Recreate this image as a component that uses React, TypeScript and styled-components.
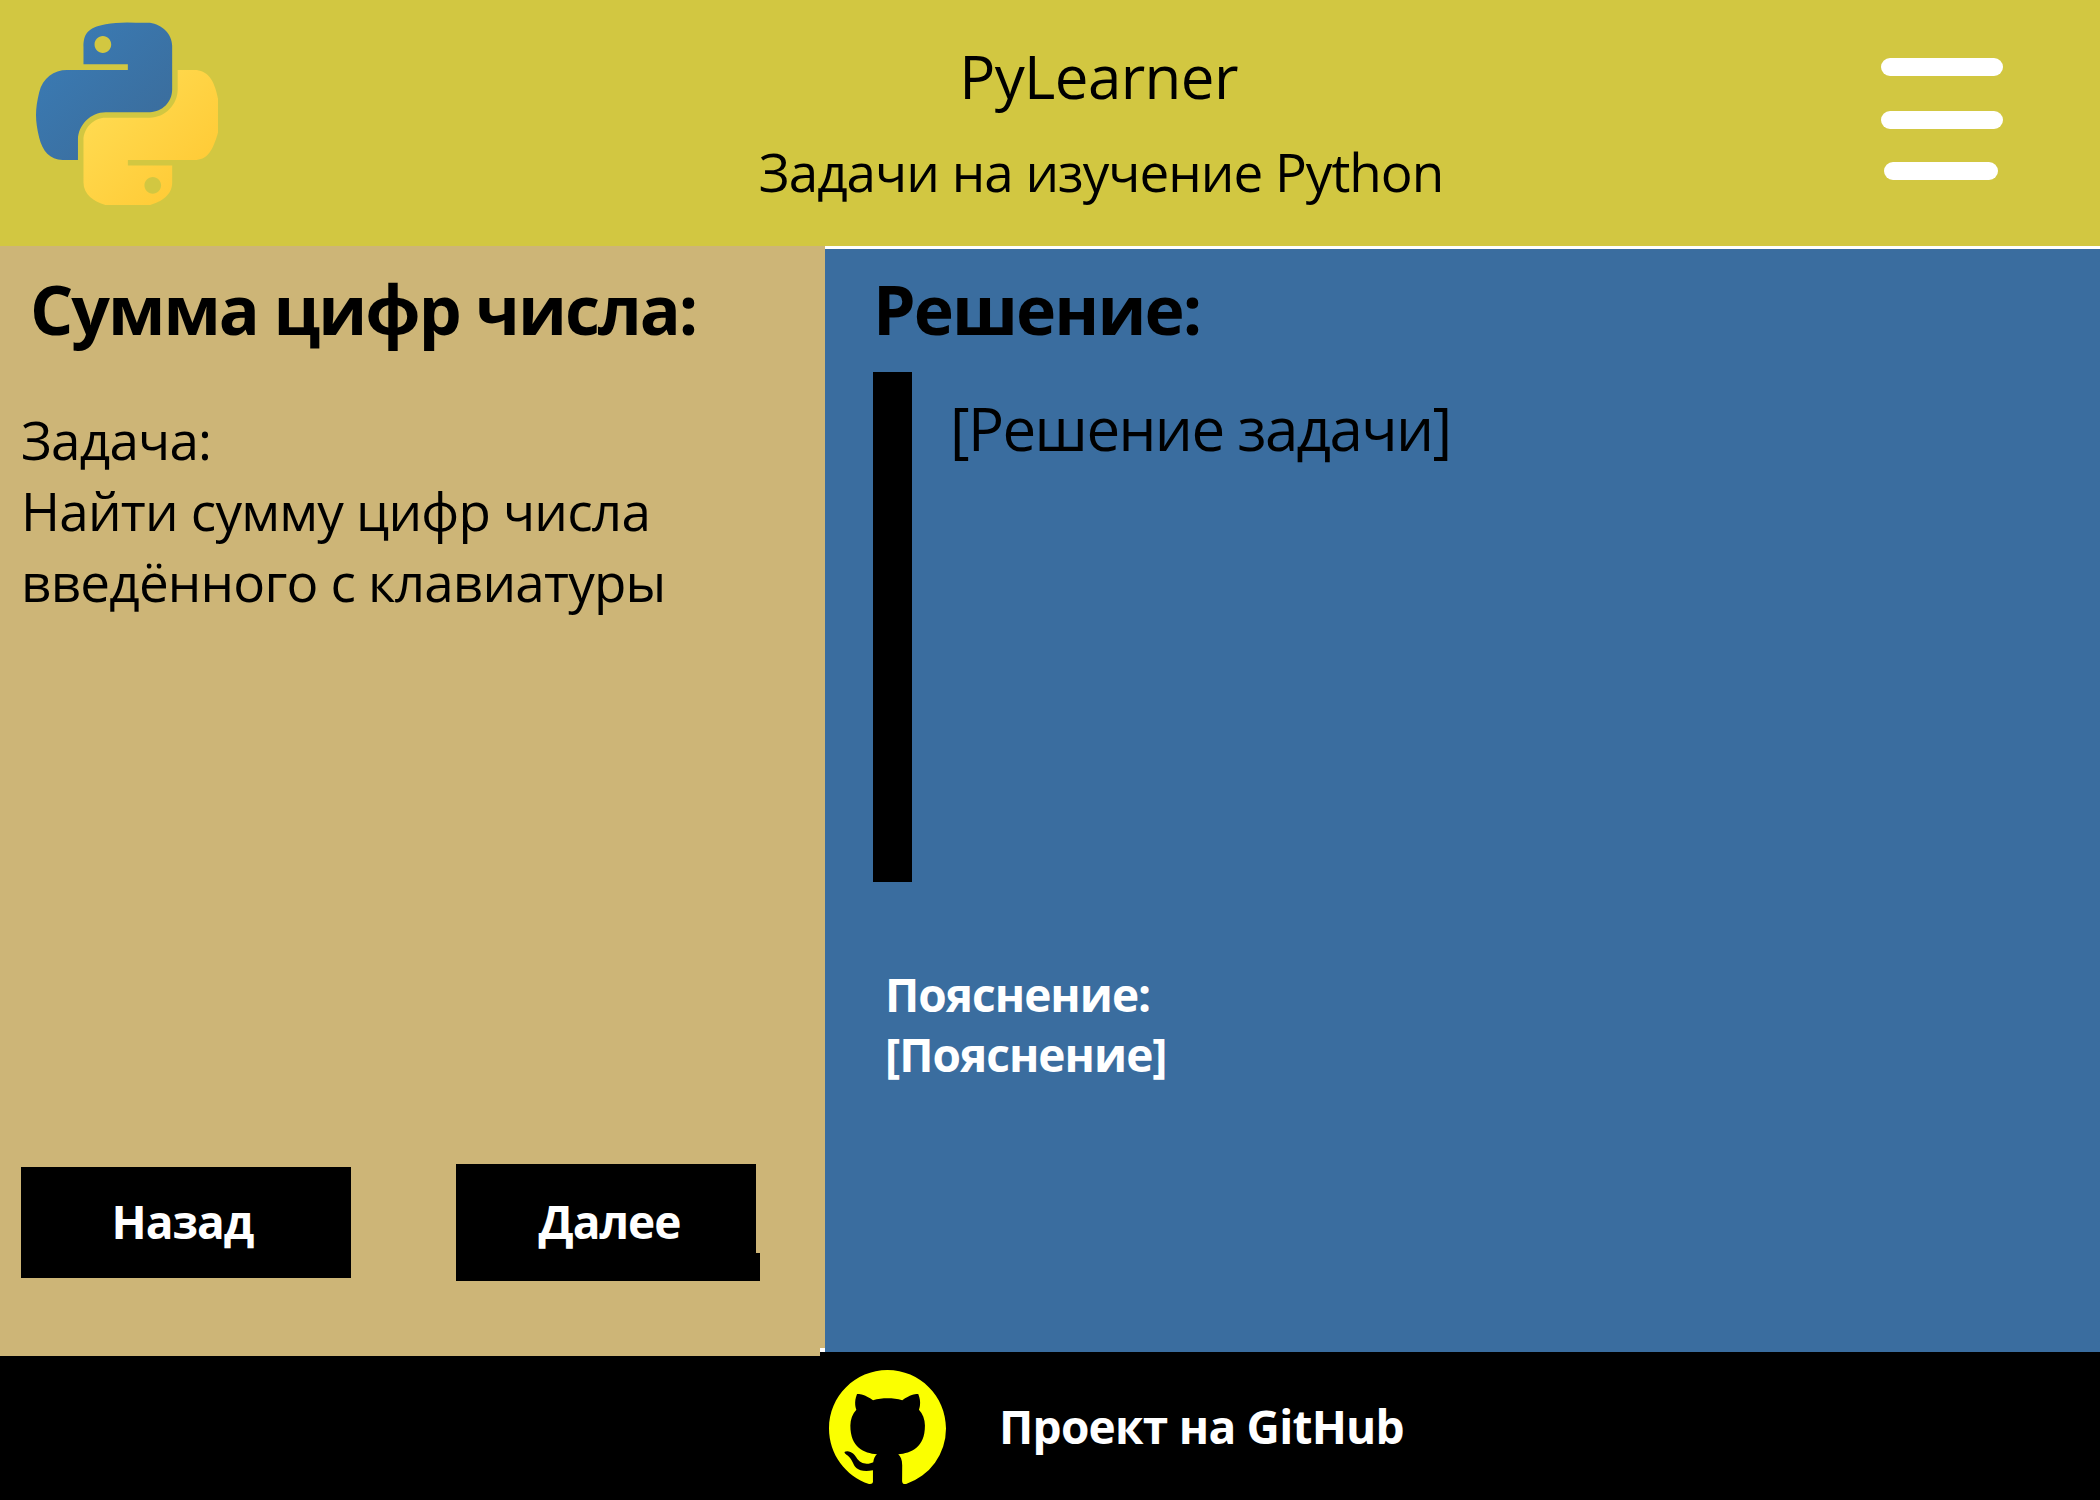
import type { FC } from 'react';
import styled, { createGlobalStyle } from 'styled-components';

const GlobalStyle = createGlobalStyle`
  html, body {
    margin: 0;
    padding: 0;
    background: #fff;
  }
  body {
    font-family: 'Open Sans', 'Noto Sans', sans-serif;
    color: #000;
  }
`;

const PythonLogo: FC = () => (
  <LogoSvg viewBox="0 0 110 110">
    <defs>
      <linearGradient id="pyBlue" x1="0" y1="0" x2="1" y2="1">
        <stop offset="0" stopColor="#3a7db8" />
        <stop offset="1" stopColor="#3b6a97" />
      </linearGradient>
      <linearGradient id="pyYellow" x1="0" y1="0" x2="1" y2="1">
        <stop offset="0" stopColor="#ffdf58" />
        <stop offset="1" stopColor="#ffc62e" />
      </linearGradient>
    </defs>
    <path
      fill="url(#pyBlue)"
      d="M54.92 0C50.34.02 45.96.41 42.11 1.09 30.76 3.1 28.7 7.29 28.7 15.03v10.22h26.81v3.41H18.64c-7.79 0-14.62 4.68-16.75 13.59-2.46 10.21-2.57 16.59 0 27.25 1.91 7.94 6.46 13.59 14.25 13.59h9.22v-12.25c0-8.85 7.66-16.66 16.75-16.66h26.78c7.45 0 13.41-6.14 13.41-13.62V14.03c0-7.27-6.13-12.72-13.41-13.94C64.28.33 59.5-.02 54.92 0zM40.42 8.22c2.77 0 5.03 2.3 5.03 5.12 0 2.82-2.26 5.09-5.03 5.09-2.78 0-5.03-2.27-5.03-5.09 0-2.82 2.25-5.12 5.03-5.12z"
    />
    <path
      fill="url(#pyYellow)"
      d="M85.64 28.66v11.9c0 9.24-7.83 17-16.75 17H42.11c-7.34 0-13.41 6.28-13.41 13.63v25.53c0 7.27 6.32 11.54 13.41 13.63 8.49 2.5 16.63 2.94 26.78 0 6.75-1.95 13.41-5.89 13.41-13.63V86.5H55.52v-3.4h40.19c7.79 0 10.69-5.44 13.4-13.6 2.8-8.4 2.74-16.47 0-27.25-1.92-7.76-5.6-13.59-13.4-13.59zM70.57 93.31c2.78 0 5.03 2.28 5.03 5.1 0 2.82-2.25 5.12-5.03 5.12-2.77 0-5.03-2.3-5.03-5.12 0-2.82 2.26-5.1 5.03-5.1z"
    />
  </LogoSvg>
);

const GithubMark: FC = () => (
  <GithubSvg viewBox="0 0 16 16">
    <path
      fill="#fbff00"
      d="M8 0C3.58 0 0 3.58 0 8c0 3.54 2.29 6.53 5.47 7.59.4.07.55-.17.55-.38 0-.19-.01-.82-.01-1.49-2.01.37-2.53-.49-2.69-.94-.09-.23-.48-.94-.82-1.13-.28-.15-.68-.52-.01-.53.63-.01 1.08.58 1.23.82.72 1.21 1.87.87 2.33.66.07-.52.28-.87.51-1.07-1.78-.2-3.64-.89-3.64-3.95 0-.87.31-1.59.82-2.15-.08-.2-.36-1.02.08-2.12 0 0 .67-.21 2.2.82.64-.18 1.32-.27 2-.27.68 0 1.36.09 2 .27 1.53-1.04 2.2-.82 2.2-.82.44 1.1.16 1.92.08 2.12.51.56.82 1.27.82 2.15 0 3.07-1.87 3.75-3.65 3.95.29.25.54.73.54 1.48 0 1.07-.01 1.93-.01 2.2 0 .21.15.46.55.38A8.013 8.013 0 0016 8c0-4.42-3.58-8-8-8z"
    />
  </GithubSvg>
);

const App: FC = () => (
  <Page>
    <GlobalStyle />
    <Header>
      <PythonLogo />
      <Titles>
        <SiteName>PyLearner</SiteName>
        <SiteTagline>Задачи на изучение Python</SiteTagline>
      </Titles>
      <Burger>
        <BurgerBar />
        <BurgerBar />
        <BurgerBar $short />
      </Burger>
    </Header>
    <Main>
      <TaskPanel>
        <TaskTitle>Сумма цифр числа:</TaskTitle>
        <TaskText>
          Задача:
          <br />
          Найти сумму цифр числа
          <br />
          введённого с клавиатуры
        </TaskText>
        <Buttons>
          <BackButton>Назад</BackButton>
          <NextButton>Далее</NextButton>
        </Buttons>
      </TaskPanel>
      <SolutionPanel>
        <SolutionTitle>Решение:</SolutionTitle>
        <CodeRow>
          <CodeBar />
          <CodeText>[Решение задачи]</CodeText>
        </CodeRow>
        <Explanation>
          Пояснение:
          <br />
          [Пояснение]
        </Explanation>
      </SolutionPanel>
    </Main>
    <Footer>
      <GithubMark />
      <FooterText>Проект на GitHub</FooterText>
    </Footer>
  </Page>
);

export default App;

const Page = styled.div`
  width: 2100px;
  height: 1500px;
  overflow: hidden;
  display: flex;
  flex-direction: column;
`;

const Header = styled.header`
  height: 246px;
  flex: none;
  background: #d2c741;
  display: flex;
  align-items: flex-start;
  padding: 0 97px 0 36px;
`;

const LogoSvg = styled.svg`
  width: 182px;
  height: 183px;
  margin-top: 22px;
  flex: none;
`;

const Titles = styled.div`
  width: 1000px;
  margin-left: 383px;
  text-align: center;
`;

const SiteName = styled.div`
  font-size: 60px;
  line-height: 80px;
  margin-top: 36px;
  padding-right: 5px;
  letter-spacing: -0.6px;
`;

const SiteTagline = styled.div`
  font-size: 53px;
  line-height: 72px;
  margin-top: 20px;
  letter-spacing: -1px;
`;

const Burger = styled.div`
  width: 122px;
  margin-left: auto;
  margin-top: 58px;
  display: flex;
  flex-direction: column;
  align-items: center;
  gap: 35px;
`;

const BurgerBar = styled.div<{ $short?: boolean }>`
  width: ${(p) => (p.$short ? '114px' : '122px')};
  height: 18px;
  border-radius: 9px;
  background: #fff;
  margin-top: ${(p) => (p.$short ? '-2px' : '0')};
  margin-right: ${(p) => (p.$short ? '2px' : '0')};
`;

const Main = styled.main`
  height: 1106px;
  flex: none;
  display: flex;
`;

const TaskPanel = styled.section`
  width: 825px;
  flex: none;
  margin-bottom: -4px;
  position: relative;
  z-index: 1;
  background: #cdb577;
  display: flex;
  flex-direction: column;
  clip-path: polygon(0 0, 100% 0, 100% 1102px, 820px 1102px, 820px 100%, 0 100%);
`;

const TaskTitle = styled.h1`
  margin: 15px 0 0 30px;
  font-size: 68px;
  line-height: 96px;
  font-weight: 700;
  letter-spacing: -2px;
  white-space: nowrap;
`;

const TaskText = styled.p`
  margin: 47px 0 0 21px;
  font-size: 53px;
  line-height: 71px;
  letter-spacing: -0.8px;
`;

const Buttons = styled.div`
  display: flex;
  align-items: center;
  margin-top: 547px;
  padding-left: 21px;
  gap: 105px;
`;

const BackButton = styled.button`
  width: 330px;
  height: 111px;
  border: 0;
  padding: 0 7px 4px 0;
  background: #000;
  color: #fff;
  font: 700 46px 'Open Sans', sans-serif;
  letter-spacing: -1px;
`;

const NextButton = styled(BackButton)`
  width: 300px;
  height: 117px;
  padding: 0 0 4px 7px;
  position: relative;

  &::after {
    content: '';
    position: absolute;
    right: -4px;
    bottom: 0;
    width: 4px;
    height: 28px;
    background: #000;
  }
`;

const SolutionPanel = styled.section`
  flex: 1;
  background: #3a6d9f;
  border-top: 3px solid #fff;
  padding-left: 48px;
  display: flex;
  flex-direction: column;
`;

const SolutionTitle = styled.h2`
  margin: 12px 0 0;
  font-size: 68px;
  line-height: 96px;
  font-weight: 700;
  letter-spacing: -1.9px;
`;

const CodeRow = styled.div`
  display: flex;
  align-items: flex-start;
  margin-top: 15px;
  gap: 38px;
`;

const CodeBar = styled.div`
  width: 39px;
  height: 510px;
  background: #000;
  flex: none;
`;

const CodeText = styled.div`
  font-size: 60px;
  line-height: 84px;
  margin-top: 14px;
  letter-spacing: -1.6px;
`;

const Explanation = styled.div`
  margin: 82px 0 0 12px;
  font-size: 46px;
  line-height: 60px;
  font-weight: 700;
  color: #fff;
  letter-spacing: -1px;
`;

const Footer = styled.footer`
  flex: 1;
  background: #000;
  display: flex;
  align-items: center;
  padding-left: 829px;
`;

const GithubSvg = styled.svg`
  width: 117px;
  height: 117px;
  margin-top: 4px;
  flex: none;
`;

const FooterText = styled.div`
  margin-left: 53px;
  color: #fff;
  font-size: 46px;
  font-weight: 700;
  letter-spacing: -0.75px;
  white-space: nowrap;
`;
